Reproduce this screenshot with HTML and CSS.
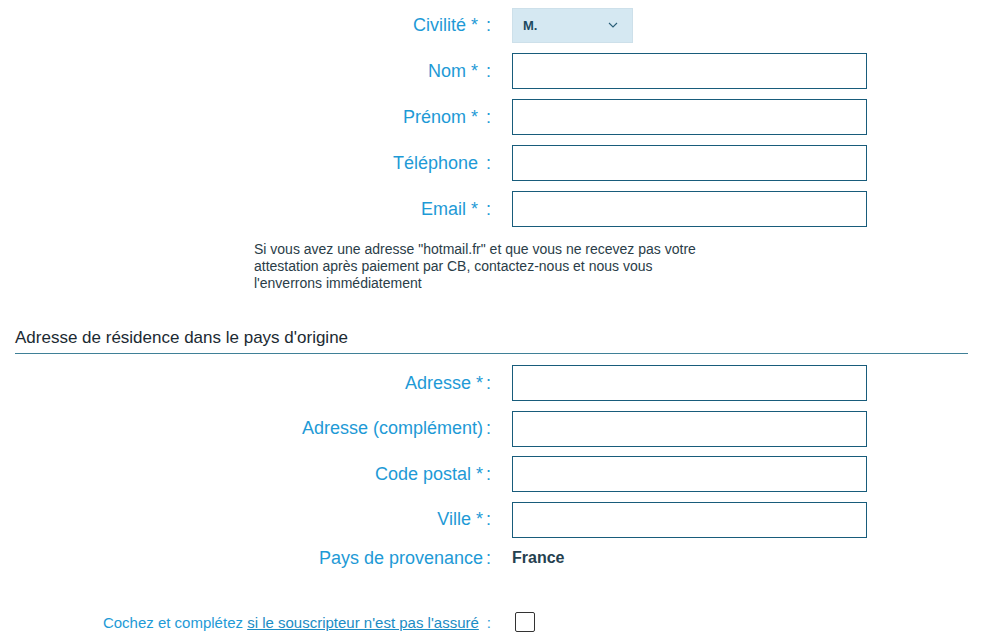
FILE: index.html
```html
<!DOCTYPE html>
<html lang="fr">
<head>
<meta charset="utf-8">
<link rel="stylesheet" href="styles.css">
</head>
<body>
<form class="form">
  <div class="row first">
    <label class="lbl">Civilité *<span class="colon">:</span></label>
    <div class="select">
      <span class="sel-val">M.</span>
      <svg class="chev" width="10" height="6" viewBox="0 0 10 6"><path d="M1 1 L5 5 L9 1" fill="none" stroke="#2a5f78" stroke-width="1.1"/></svg>
    </div>
  </div>
  <div class="row">
    <label class="lbl">Nom *<span class="colon">:</span></label>
    <input class="field" type="text">
  </div>
  <div class="row">
    <label class="lbl">Prénom *<span class="colon">:</span></label>
    <input class="field" type="text">
  </div>
  <div class="row">
    <label class="lbl">Téléphone<span class="colon">:</span></label>
    <input class="field" type="text">
  </div>
  <div class="row">
    <label class="lbl">Email *<span class="colon">:</span></label>
    <input class="field" type="text">
  </div>
  <p class="note">Si vous avez une adresse "hotmail.fr" et que vous ne recevez pas votre<br>attestation après paiement par CB, contactez-nous et nous vous<br>l'enverrons immédiatement</p>

  <h2 class="section">Adresse de résidence dans le pays d'origine</h2>

  <div class="row addr">
    <label class="lbl">Adresse *<span class="colon tight">:</span></label>
    <input class="field" type="text">
  </div>
  <div class="row addr">
    <label class="lbl">Adresse (complément)<span class="colon tight">:</span></label>
    <input class="field" type="text">
  </div>
  <div class="row addr">
    <label class="lbl">Code postal *<span class="colon tight">:</span></label>
    <input class="field" type="text">
  </div>
  <div class="row addr">
    <label class="lbl">Ville *<span class="colon tight">:</span></label>
    <input class="field" type="text">
  </div>
  <div class="row static">
    <label class="lbl">Pays de provenance<span class="colon tight">:</span></label>
    <span class="value">France</span>
  </div>
  <div class="row check">
    <label class="lbl small">Cochez et complétez <a class="link" href="#">si le souscripteur n'est pas l'assuré</a><span class="colon">:</span></label>
    <span class="box"></span>
  </div>
</form>
</body>
</html>
```

FILE: styles.css
```css
html, body {
  margin: 0;
  padding: 0;
  background: #ffffff;
}
body {
  font-family: "Liberation Sans", Arial, sans-serif;
}
.form {
  padding-top: 7px;
  width: 1000px;
}
.row {
  display: flex;
  align-items: center;
  height: 36px;
  margin-bottom: 10px;
}
.row.addr {
  margin-bottom: 9.5px;
}
.lbl {
  width: 492px;
  flex: none;
  text-align: right;
  font-size: 18px;
  color: #1e9ad6;
  white-space: nowrap;
}
.colon {
  display: inline-block;
  margin-left: 8px;
  margin-right: 1px;
}
.colon.tight {
  margin-left: 3px;
}
.lbl.small {
  font-size: 15px;
}
.lbl.small .colon {
  margin-left: 8px;
  margin-right: 1px;
}
.link {
  color: #1b8cc4;
  text-decoration: underline;
}
.select {
  margin-left: 20px;
  width: 121px;
  height: 35px;
  box-sizing: border-box;
  background: #d5e8f2;
  border: 1px solid #cde0ea;
  display: flex;
  align-items: center;
  justify-content: space-between;
  padding: 0 14px 0 10px;
}
.sel-val {
  font-size: 13px;
  font-weight: bold;
  color: #1c4a60;
}
.chev {
  display: block;
}
.field {
  margin: 0 0 0 20px;
  width: 355px;
  height: 36px;
  box-sizing: border-box;
  border: 1px solid #185c7b;
  border-radius: 0;
  background: #fff;
  padding: 0 8px;
  outline: none;
}
.note {
  margin: 14px 0 0 254px;
  font-size: 14px;
  line-height: 17px;
  color: #2a3d48;
}
.section {
  margin: 36px 32px 11px 15px;
  font-size: 17px;
  font-weight: normal;
  color: #1b2a33;
  line-height: 20px;
  padding-bottom: 5px;
  border-bottom: 1px solid #3f8097;
}
.row.static {
  height: 22px;
  margin-top: 1px;
  margin-bottom: 0;
}
.value {
  margin-left: 20px;
  font-size: 16px;
  font-weight: bold;
  color: #25414f;
}
.row.check {
  margin-top: 42px;
  height: 22px;
}
.box {
  margin-left: 23px;
  width: 20px;
  height: 20px;
  box-sizing: border-box;
  border: 1.5px solid #333;
  border-radius: 2px;
  background: #fff;
}
```
